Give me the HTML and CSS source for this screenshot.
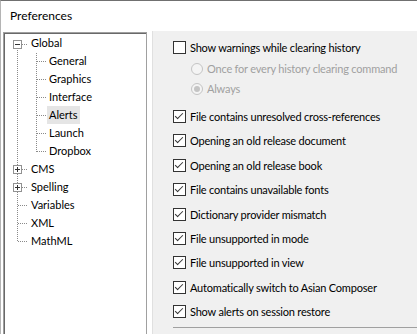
FILE: index.html
```html
<!DOCTYPE html>
<html>
<head>
<meta charset="utf-8">
<link rel="stylesheet" href="styles.css">
</head>
<body>
<div class="window">
  <div class="titlebar">Preferences</div>
  <div class="main">
    <div class="tree">
      <svg class="guides" width="140" height="300" viewBox="0 0 140 300">
        <g stroke="#8a8a8a" stroke-width="1" stroke-dasharray="1 1" fill="none">
          <line x1="13.5" y1="17" x2="13.5" y2="208"/>
          <line x1="18" y1="11.5" x2="24" y2="11.5"/>
          <line x1="32.5" y1="20" x2="32.5" y2="119"/>
          <line x1="33" y1="28.5" x2="42" y2="28.5"/>
          <line x1="33" y1="46.5" x2="42" y2="46.5"/>
          <line x1="33" y1="64.5" x2="42" y2="64.5"/>
          <line x1="33" y1="82.5" x2="42" y2="82.5"/>
          <line x1="33" y1="100.5" x2="42" y2="100.5"/>
          <line x1="33" y1="118.5" x2="42" y2="118.5"/>
          <line x1="18" y1="136.5" x2="24" y2="136.5"/>
          <line x1="18" y1="154.5" x2="24" y2="154.5"/>
          <line x1="14" y1="172.5" x2="24" y2="172.5"/>
          <line x1="14" y1="190.5" x2="24" y2="190.5"/>
          <line x1="14" y1="208.5" x2="24" y2="208.5"/>
        </g>
        <g stroke="#919191" fill="#fff">
          <rect x="9.5" y="7.5" width="8" height="8"/>
          <rect x="9.5" y="132.5" width="8" height="8"/>
          <rect x="9.5" y="150.5" width="8" height="8"/>
        </g>
        <g stroke="#333" stroke-width="1">
          <line x1="11" y1="11.5" x2="16" y2="11.5"/>
          <line x1="11" y1="136.5" x2="16" y2="136.5"/>
          <line x1="13.5" y1="134" x2="13.5" y2="139"/>
          <line x1="11" y1="154.5" x2="16" y2="154.5"/>
          <line x1="13.5" y1="152" x2="13.5" y2="157"/>
        </g>
      </svg>
      <ul class="nodes">
        <li class="node lvl0">Global</li>
        <li class="node lvl1">General</li>
        <li class="node lvl1">Graphics</li>
        <li class="node lvl1">Interface</li>
        <li class="node lvl1"><span class="sel">Alerts</span></li>
        <li class="node lvl1">Launch</li>
        <li class="node lvl1">Dropbox</li>
        <li class="node lvl0">CMS</li>
        <li class="node lvl0">Spelling</li>
        <li class="node lvl0">Variables</li>
        <li class="node lvl0">XML</li>
        <li class="node lvl0">MathML</li>
      </ul>
    </div>
    <div class="panel">
      <div class="group">
        <label class="row first"><span class="box"></span><span>Show warnings while clearing history</span></label>
        <label class="row radio-row disabled"><span class="radio"></span><span>Once for every history clearing command</span></label>
        <label class="row radio-row disabled"><span class="radio on"></span><span>Always</span></label>
      </div>
      <div class="list">
        <label class="row"><span class="box checked"></span><span>File contains unresolved cross-references</span></label>
        <label class="row"><span class="box checked"></span><span>Opening an old release document</span></label>
        <label class="row"><span class="box checked"></span><span>Opening an old release book</span></label>
        <label class="row"><span class="box checked"></span><span>File contains unavailable fonts</span></label>
        <label class="row"><span class="box checked"></span><span>Dictionary provider mismatch</span></label>
        <label class="row"><span class="box checked"></span><span>File unsupported in mode</span></label>
        <label class="row"><span class="box checked"></span><span>File unsupported in view</span></label>
        <label class="row"><span class="box checked"></span><span>Automatically switch to Asian Composer</span></label>
        <label class="row"><span class="box checked"></span><span>Show alerts on session restore</span></label>
      </div>
      <div class="sep"></div>
    </div>
  </div>
</div>
</body>
</html>
```
FILE: styles.css
```css
html, body {
  margin: 0;
  padding: 0;
}
body {
  width: 417px;
  height: 334px;
  overflow: hidden;
  background: #fff;
  font-family: Lato, "Noto Sans", sans-serif;
  font-size: 11px;
  color: #000;
}
.window {
  box-sizing: border-box;
  height: 334px;
  border-top: 1px solid #707070;
  border-left: 1px solid #b4b4b4;
  display: flex;
  flex-direction: column;
}
.titlebar {
  height: 30px;
  line-height: 30px;
  padding-left: 9px;
  font-size: 12px;
  flex: none;
}
.main {
  flex: 1;
  display: flex;
  min-height: 0;
}
.tree {
  position: relative;
  box-sizing: border-box;
  width: 144px;
  margin-left: 2px;
  margin-top: 1px;
  border-top: 1px solid #a0a0a0;
  border-left: 1px solid #a0a0a0;
  border-right: 1px solid #a0a0a0;
  box-shadow: inset 1px 1px 0 #696969;
  background: #fff;
  flex: none;
}
.guides {
  position: absolute;
  left: 0;
  top: 0;
}
.nodes {
  list-style: none;
  margin: 0;
  padding: 1px 0 0 0;
  position: relative;
}
.node {
  height: 18px;
  line-height: 18px;
  white-space: nowrap;
}
.lvl0 { padding-left: 27px; }
.lvl1 { padding-left: 45px; }
.sel {
  background: #e5e5e5;
  padding: 0 2px;
  margin-left: -2px;
  display: inline-block;
}
.panel {
  flex: 1;
  margin-left: 5px;
  border-left: 1px solid #e0e0e0;
  background: #f0f0f0;
  padding: 10px 0 0 20px;
  letter-spacing: -0.2px;
}
.row {
  display: flex;
  align-items: center;
  white-space: nowrap;
}
.group .first { height: 13px; margin-bottom: 8px; }
.radio-row {
  height: 13px;
  padding-left: 18px;
  margin-bottom: 7px;
}
.disabled { color: #a0a0a0; }
.list {
  margin-top: 15px;
  display: flex;
  flex-direction: column;
  gap: 11.4px;
}
.list .row { height: 13px; }
.box {
  box-sizing: border-box;
  width: 13px;
  height: 13px;
  border: 1px solid #333;
  background: #fff;
  margin-right: 4px;
  flex: none;
  position: relative;
}
.box.checked::after {
  content: "";
  position: absolute;
  left: 3px;
  top: 0px;
  width: 3px;
  height: 7px;
  border-right: 1px solid #333;
  border-bottom: 1px solid #333;
  transform: rotate(45deg);
}
.radio {
  box-sizing: border-box;
  width: 12px;
  height: 12px;
  border-radius: 50%;
  border: 1px solid #c4c4c4;
  background: #f4f4f4;
  margin-right: 4px;
  flex: none;
  position: relative;
}
.radio.on::after {
  content: "";
  position: absolute;
  left: 2px;
  top: 2px;
  width: 6px;
  height: 6px;
  border-radius: 50%;
  background: #c4c4c4;
}
.sep {
  margin-top: 9px;
  height: 1px;
  background: #a0a0a0;
}
```
